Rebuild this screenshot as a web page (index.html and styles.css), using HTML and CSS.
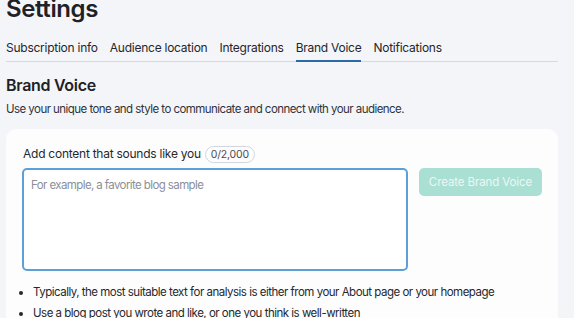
FILE: index.html
```html
<!DOCTYPE html>
<html lang="en">
<head>
  <meta charset="UTF-8" />
  <meta name="viewport" content="width=device-width, initial-scale=1" />
  <title>Settings</title>
  <link rel="stylesheet" href="styles.css">
</head>
<body>
  <div class="page">
    <h1>Settings</h1>
    <div class="tabs">
      <a class="tab">Subscription info</a>
      <a class="tab">Audience location</a>
      <a class="tab">Integrations</a>
      <a class="tab active">Brand Voice</a>
      <a class="tab">Notifications</a>
    </div>

    <h2>Brand Voice</h2>
    <div class="subtitle">Use your unique tone and style to communicate and connect with your audience.</div>

    <div class="card">
      <div class="label">Add content that sounds like you <span class="counter">0/2,000</span></div>
      <div class="row">
        <textarea class="sample" placeholder="For example, a favorite blog sample"></textarea>
        <button class="create" disabled>Create Brand Voice</button>
      </div>
      <ul class="tips">
        <li>Typically, the most suitable text for analysis is either from your About page or your homepage</li>
        <li>Use a blog post you wrote and like, or one you think is well-written</li>
      </ul>
    </div>
  </div>
</body>
</html>
```

FILE: styles.css
```css
html, body {
  margin: 0;
  padding: 0;
  background: #f4f5f9;
  color: #1f2126;
  font-family: Inter, "Noto Sans", sans-serif;
  overflow: hidden;
}
.page {
  width: 552px;
  padding: 0 6px;
}
h1 {
  margin: 0;
  font-size: 24px;
  line-height: 18px;
  font-weight: 600;
  letter-spacing: -0.4px;
}
.tabs {
  display: flex;
  gap: 12px;
  margin-top: 22px;
  border-bottom: 1px solid #d6d9df;
}
.tab {
  font-size: 12px;
  letter-spacing: -0.25px;
  line-height: 16px;
  padding-bottom: 4px;
  margin-bottom: -1px;
  border-bottom: 2px solid transparent;
  color: #24262b;
}
.tab.active {
  border-bottom-color: #2b6aa6;
}
h2 {
  margin: 12px 0 0;
  font-size: 16px;
  letter-spacing: -0.3px;
  line-height: 22px;
  font-weight: 600;
}
.subtitle {
  margin-top: 5px;
  font-size: 11.5px;
  letter-spacing: -0.55px;
  line-height: 16px;
  color: #30333a;
}
.card {
  margin-top: 12px;
  background: #fdfdfe;
  border-radius: 10px;
  padding: 16px 16px 10px 16px;
}
.label {
  display: flex;
  align-items: center;
  gap: 4px;
  padding-left: 1px;
  font-size: 12px;
  letter-spacing: -0.25px;
  line-height: 18px;
  color: #26282d;
}
.counter {
  font-size: 10.5px;
  letter-spacing: -0.2px;
  line-height: 15px;
  padding: 0 5px;
  border: 1px solid #d3d6dc;
  border-radius: 9px;
  color: #4a4d55;
}
.row {
  display: flex;
  align-items: flex-start;
  gap: 11px;
  margin-top: 5px;
}
.sample {
  width: 386px;
  height: 103px;
  box-sizing: border-box;
  margin: 0;
  padding: 6px 7px;
  border: 2px solid #5ba0d8;
  border-radius: 5px;
  resize: none;
  font-family: inherit;
  font-size: 11.5px;
  letter-spacing: -0.6px;
  line-height: 18px;
  background: #fff;
}
.sample::placeholder {
  color: #8b8f98;
}
.create {
  width: 123px;
  height: 28px;
  border: none;
  border-radius: 5px;
  background: #aadfd3;
  color: #eaf8f4;
  font-family: inherit;
  font-size: 11.5px;
  letter-spacing: -0.1px;
}
.tips {
  margin: 11px 0 0;
  padding-left: 11px;
  font-size: 11.5px;
  letter-spacing: -0.5px;
  line-height: 21px;
  color: #26282d;
}
```
